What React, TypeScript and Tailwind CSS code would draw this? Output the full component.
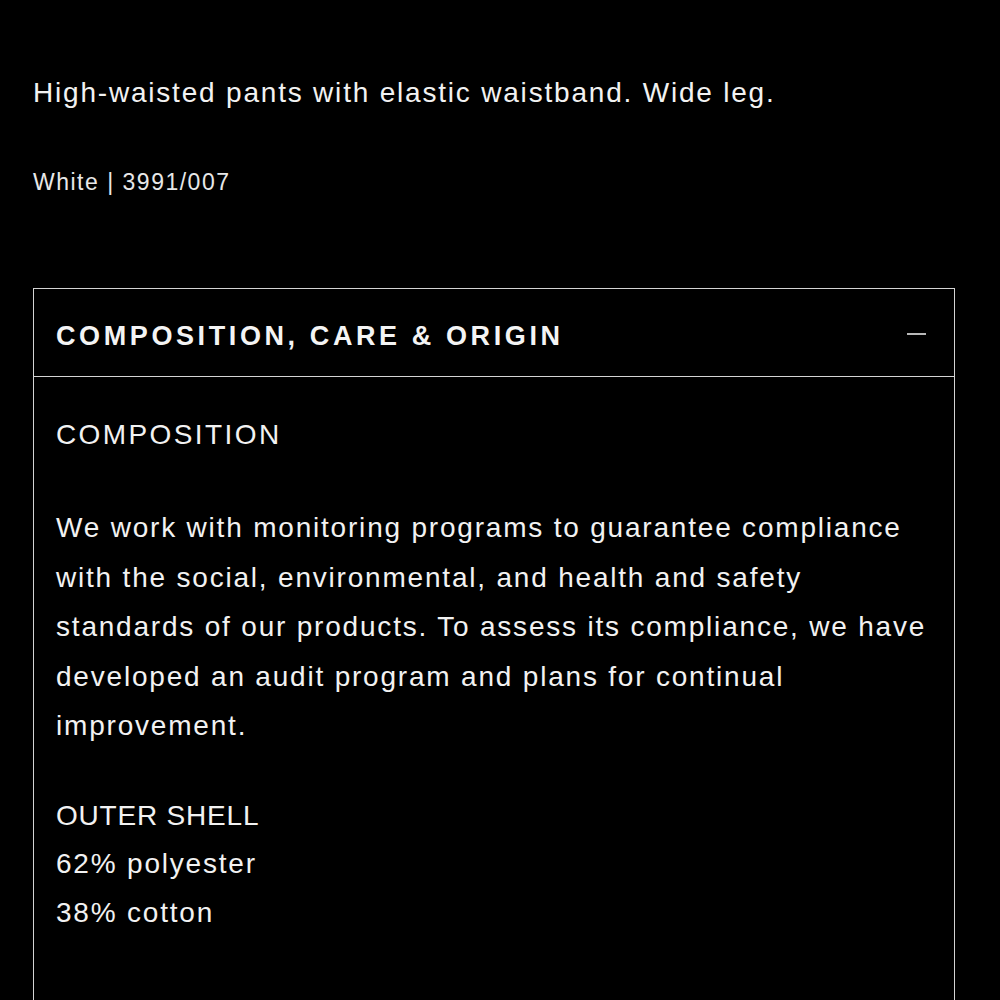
import React, { useState } from 'react';

const font = { fontFamily: '"Liberation Sans", Arial, sans-serif' };

const outerShell = ['62% polyester', '38% cotton'];

function CompositionPanel() {
  const [open, setOpen] = useState(true);

  return (
    <section className="border border-[#d4d4d4]">
      <button
        onClick={() => setOpen(!open)}
        className="flex h-[87px] w-full items-center justify-between pl-[22px] pr-[28px] text-left"
      >
        <span className="pt-[7px] text-[27px] font-bold tracking-[3.6px] text-[#f4f4f4]">
          COMPOSITION, CARE &amp; ORIGIN
        </span>
        <span className="mt-[2px] block h-[2px] w-[19px] bg-[#b8b8b8]" />
      </button>

      {open && (
        <div className="border-t border-[#d4d4d4] px-[22px] pb-[120px] pt-[34px] text-[28px] tracking-[1.8px] text-[#f2f2f2]">
          <h3 className="leading-[48px] tracking-[2.4px]">COMPOSITION</h3>
          <p className="mt-[44px] leading-[49.5px]">
            We work with monitoring programs to guarantee compliance
            <br />
            with the social, environmental, and health and safety
            <br />
            standards of our products. To assess its compliance, we have
            <br />
            developed an audit program and plans for continual
            <br />
            improvement.
          </p>
          <div className="mt-[41px] leading-[48.5px]">
            <div className="tracking-[0.8px]">OUTER SHELL</div>
            {outerShell.map((line) => (
              <div key={line}>{line}</div>
            ))}
          </div>
        </div>
      )}
    </section>
  );
}

export default function App() {
  return (
    <div className="min-h-screen bg-black px-[33px] pt-[73px] pb-[40px]" style={font}>
      <p className="text-[28px] leading-[40px] tracking-[1.8px] text-[#f2f2f2]">
        High-waisted pants with elastic waistband. Wide leg.
      </p>
      <p className="mt-[54px] text-[23px] leading-[30px] tracking-[1.5px] text-[#e8e8e8]">
        White | 3991/007
      </p>
      <div className="mt-[91px] w-[922px]">
        <CompositionPanel />
      </div>
    </div>
  );
}
